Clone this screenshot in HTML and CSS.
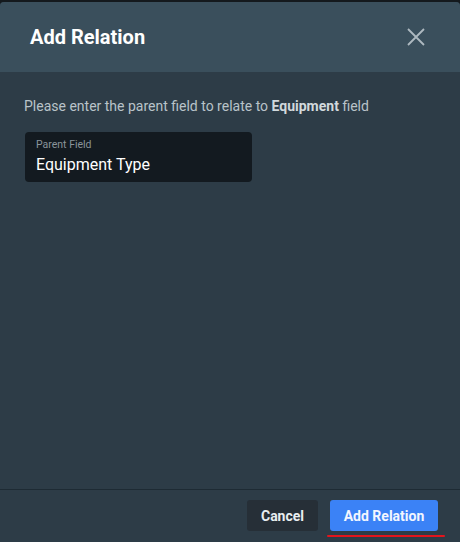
FILE: index.html
```html
<!DOCTYPE html>
<html>
<head>
<meta charset="utf-8">
<link rel="stylesheet" href="styles.css">
</head>
<body>
<div class="dialog">
  <div class="header">
    <h1 class="title">Add Relation</h1>
    <button class="close" aria-label="Close">
      <svg width="18" height="18" viewBox="0 0 18 18"><path d="M1 1L17 17M17 1L1 17" stroke="#aeb9c0" stroke-width="1.8" fill="none"/></svg>
    </button>
  </div>
  <div class="content">
    <p class="prompt">Please enter the parent field to relate to <b>Equipment</b> field</p>
    <div class="field">
      <span class="label">Parent Field</span>
      <span class="value">Equipment Type</span>
    </div>
  </div>
  <div class="footer">
    <button class="btn cancel">Cancel</button>
    <button class="btn primary">Add Relation<span class="mark"></span></button>
  </div>
</div>
</body>
</html>
```
FILE: styles.css
```css
html, body { margin: 0; padding: 0; height: 100%; }
body {
  background: #14191d;
  font-family: Roboto, "Noto Sans", sans-serif;
  padding-top: 2px;
  box-sizing: border-box;
}
.dialog {
  height: 540px;
  background: #2d3c47;
  border-radius: 4px 4px 0 0;
  display: flex;
  flex-direction: column;
}
.header {
  height: 70px;
  background: #3a4f5c;
  border-radius: 4px 4px 0 0;
  display: flex;
  align-items: center;
  justify-content: space-between;
  padding: 0 35px 0 30px;
  flex: none;
}
.title {
  margin: 0;
  color: #ffffff;
  font-size: 20px;
  font-weight: 700;
  padding-bottom: 1px;
}
.close {
  background: none;
  border: 0;
  padding: 0;
  width: 18px;
  height: 18px;
  display: flex;
}
.content {
  flex: 1;
  padding: 24px 24px 0 24px;
}
.prompt {
  margin: 0;
  color: #b9c3c9;
  font-size: 14px;
  line-height: 20px;
}
.prompt b { color: #d2d9dd; font-weight: 700; }
.field {
  margin-top: 16px;
  margin-left: 1px;
  width: 227px;
  height: 50px;
  box-sizing: border-box;
  background: #131a20;
  border-radius: 4px;
  padding: 7px 11px 0;
  display: flex;
  flex-direction: column;
}
.label {
  color: #8a949a;
  font-size: 10.5px;
  line-height: 12px;
}
.value {
  color: #ffffff;
  font-size: 16px;
  line-height: 20px;
  margin-top: 4px;
}
.footer {
  flex: none;
  height: 53px;
  border-top: 1px solid #1e2b34;
  display: flex;
  justify-content: flex-end;
  align-items: flex-start;
  gap: 12px;
  padding: 10px 22px 0 0;
  box-sizing: border-box;
}
.btn {
  height: 31px;
  border: 0;
  border-radius: 3px;
  font-family: Roboto, "Noto Sans", sans-serif;
  font-size: 14px;
  font-weight: 700;
  color: #e8edf0;
  padding: 0;
  white-space: nowrap;
  position: relative;
}
.cancel { background: #262f37; width: 71px; }
.primary { background: #3b82f6; width: 108px; color: #f2f6ff; }
.mark {
  position: absolute;
  left: -3px;
  right: -7px;
  bottom: -6px;
  height: 2px;
  background: #e3141c;
  border-radius: 1px;
}
```
